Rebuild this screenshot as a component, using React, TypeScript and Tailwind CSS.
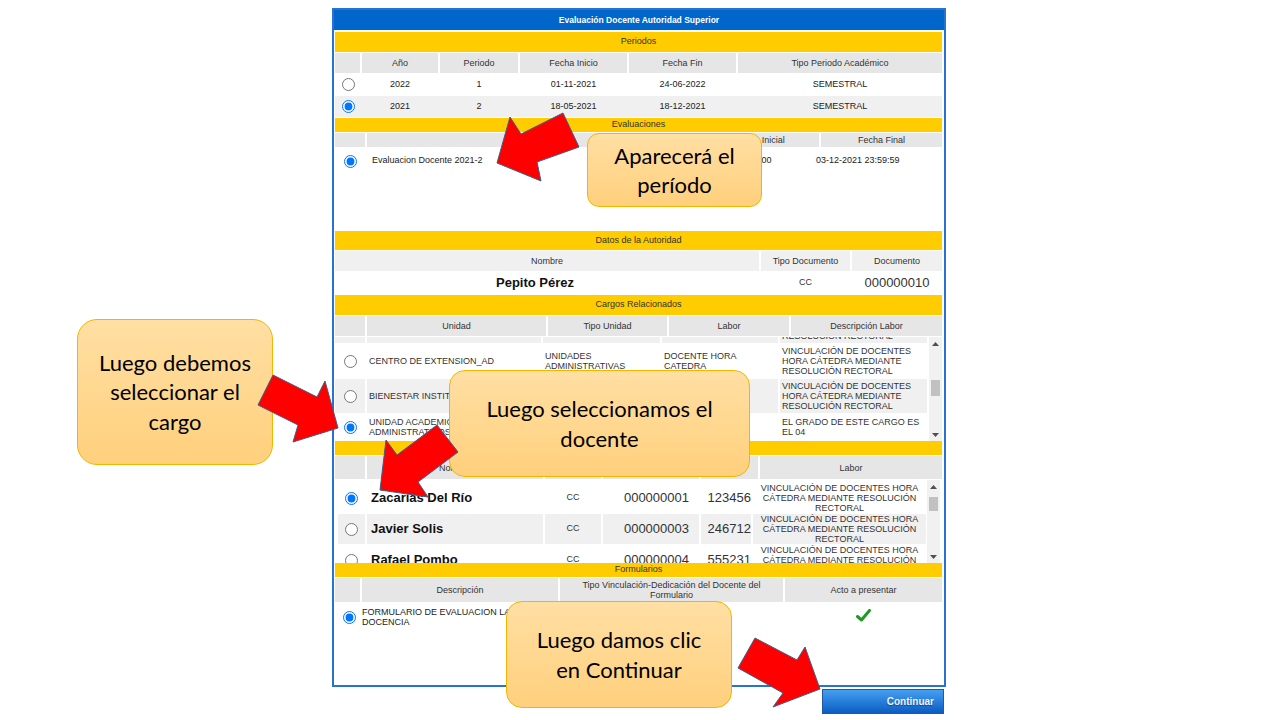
import React from "react";

function Radio({ on }: { on?: boolean }) {
  return <input type="radio" checked={!!on} readOnly className="m-0 h-[13px] w-[13px]" />;
}

function Bar({ className, children }: { className: string; children?: React.ReactNode }) {
  return (
    <div className={`bg-[#ffcc00] text-[9px] text-[#333] flex items-center justify-center ${className}`}>
      {children}
    </div>
  );
}

function Th({ className, children }: { className: string; children?: React.ReactNode }) {
  return (
    <div className={`bg-[#e6e6e6] flex items-center justify-center text-center text-[9px] leading-[10px] text-[#333] ${className}`}>
      {children}
    </div>
  );
}

function Tri({ up }: { up?: boolean }) {
  return (
    <svg width="7" height="4" viewBox="0 0 7 4">
      <polygon points={up ? "0,4 3.5,0 7,4" : "0,0 7,0 3.5,4"} fill="#505050" />
    </svg>
  );
}

function ScrollBar({ thumb }: { thumb: string }) {
  return (
    <div className="w-[13px] h-full bg-[#f1f1f1] flex flex-col">
      <div className="h-[13px] flex items-center justify-center">
        <Tri up />
      </div>
      <div className="flex-1">
        <div className={`mx-auto w-[9px] bg-[#c1c1c1] ${thumb}`} />
      </div>
      <div className="h-[13px] flex items-center justify-center">
        <Tri />
      </div>
    </div>
  );
}

const desc = (
  <>
    VINCULACIÓN DE DOCENTES
    <br />
    HORA CÁTEDRA MEDIANTE
    <br />
    RESOLUCIÓN RECTORAL
  </>
);

const labor = (
  <>
    VINCULACIÓN DE DOCENTES HORA
    <br />
    CÁTEDRA MEDIANTE RESOLUCIÓN
    <br />
    RECTORAL
  </>
);

function CargoRow({
  bg,
  h,
  on,
  unidad,
  tipo,
  lab,
  children,
}: {
  bg: string;
  h: string;
  on?: boolean;
  unidad: string;
  tipo: string;
  lab: string;
  children: React.ReactNode;
}) {
  const cell = `${bg} flex items-center pl-[2px] text-[9px] leading-[10px] text-[#333]`;
  return (
    <div className={`flex gap-[2px] ${h}`}>
      <div className={`${bg} w-[30px] flex items-center justify-center`}>
        <Radio on={on} />
      </div>
      <div className={`${cell} w-[174px]`}>{unidad}</div>
      <div className={`${cell} w-[117px]`}>{tipo}</div>
      <div className={`${cell} w-[116px]`}>{lab}</div>
      <div className={`${cell} w-[147px]`}>{children}</div>
    </div>
  );
}

function DocRow({ bg, on, name, doc, code }: { bg: string; on?: boolean; name: string; doc: string; code: string }) {
  return (
    <div className="flex gap-[2px] h-[30px] pl-[3px]">
      <div className={`${bg} w-[27px] flex items-center justify-center`}>
        <Radio on={on} />
      </div>
      <div className={`${bg} w-[176px] flex items-center pl-[4px] text-[13px] font-bold text-[#111]`}>{name}</div>
      <div className={`${bg} w-[56px] flex items-center justify-center text-[9px]`}>CC</div>
      <div className={`${bg} w-[96px] flex items-center justify-end pr-[10px] text-[13px]`}>{doc}</div>
      <div className={`${bg} w-[50px] flex items-center justify-end text-[13px]`}>{code}</div>
      <div className={`${bg} w-[173px] flex items-center justify-center text-center text-[9px] leading-[10px]`}>{labor}</div>
    </div>
  );
}

function Callout({ className, children }: { className: string; children: React.ReactNode }) {
  return (
    <div
      className={`absolute flex items-center justify-center text-center border border-[#f2b600] bg-linear-to-b from-[#ffdfa3] to-[#ffd07c] font-['Lato',sans-serif] text-[22px] leading-[29.5px] text-black ${className}`}
    >
      <div>{children}</div>
    </div>
  );
}

export default function App() {
  return (
    <div className="relative w-[1280px] h-[720px] overflow-hidden bg-white font-['Liberation_Sans',Arial,sans-serif] text-[#333]">
      <div className="ml-[332px] pt-[8px] w-[614px]">
        <div className="h-[679px] border-2 border-[#2a72d0] flex flex-col">
          <div className="h-[20px] shrink-0 bg-[#0066cc] text-white font-bold text-[8.5px] flex items-center justify-center">
            Evaluación Docente Autoridad Superior
          </div>
          <div className="pl-px pr-[2px] flex flex-col flex-1">
            {/* Periodos */}
            <Bar className="mt-[2px] h-[20px]">Periodos</Bar>
            <div className="mt-px h-[20px] flex gap-[2px]">
              <Th className="w-[25px]" />
              <Th className="w-[76px]">Año</Th>
              <Th className="w-[78px]">Periodo</Th>
              <Th className="w-[107px]">Fecha Inicio</Th>
              <Th className="w-[107px]">Fecha Fin</Th>
              <Th className="flex-1">Tipo Periodo Académico</Th>
            </div>
            {[
              { bg: "bg-white", on: false, a: "2022", p: "1", i: "01-11-2021", f: "24-06-2022" },
              { bg: "bg-[#f0f0f0]", on: true, a: "2021", p: "2", i: "18-05-2021", f: "18-12-2021" },
            ].map((r) => (
              <div key={r.a} className={`mt-px h-[21px] flex gap-[2px] text-[9px] text-[#222] ${r.bg}`}>
                <div className="w-[25px] pl-px flex items-center justify-center">
                  <Radio on={r.on} />
                </div>
                <div className="w-[76px] flex items-center justify-center">{r.a}</div>
                <div className="w-[78px] flex items-center justify-center">{r.p}</div>
                <div className="w-[107px] flex items-center justify-center">{r.i}</div>
                <div className="w-[107px] flex items-center justify-center">{r.f}</div>
                <div className="flex-1 flex items-center justify-center">SEMESTRAL</div>
              </div>
            ))}

            {/* Evaluaciones */}
            <Bar className="mt-px h-[14px]">Evaluaciones</Bar>
            <div className="mt-px h-[14px] flex gap-[2px]">
              <Th className="w-[30px]" />
              <Th className="w-[331px]">Descripción</Th>
              <Th className="w-[119px]">Fecha Inicial</Th>
              <Th className="flex-1">Fecha Final</Th>
            </div>
            <div className="h-[84px]">
              <div className="mt-[2px] h-[24px] flex gap-[2px] text-[9px] text-[#222]">
                <div className="w-[30px] flex items-center justify-center">
                  <Radio on />
                </div>
                <div className="w-[317px] flex items-center pl-[5px]">Evaluacion Docente 2021-2</div>
                <div className="w-[126px] flex items-center pl-[2px]">18-05-2021 00:00:00</div>
                <div className="flex-1 flex items-center pl-[2px]">03-12-2021 23:59:59</div>
              </div>
            </div>

            {/* Datos de la Autoridad */}
            <Bar className="h-[19px]">Datos de la Autoridad</Bar>
            <div className="mt-px h-[20px] flex gap-[2px]">
              <Th className="w-[424px] bg-[#f0f0f0]">Nombre</Th>
              <Th className="w-[89px] bg-[#f0f0f0]">Tipo Documento</Th>
              <Th className="flex-1 bg-[#f0f0f0]">Documento</Th>
            </div>
            <div className="mt-px h-[21px] flex gap-[2px]">
              <div className="w-[424px] flex items-center justify-center pr-[24px] text-[13px] font-bold text-[#111]">
                Pepito Pérez
              </div>
              <div className="w-[89px] flex items-center justify-center text-[9px]">CC</div>
              <div className="flex-1 flex items-center justify-center text-[13px]">000000010</div>
            </div>

            {/* Cargos Relacionados */}
            <Bar className="mt-[2px] h-[20px]">Cargos Relacionados</Bar>
            <div className="mt-px h-[20px] flex gap-[2px]">
              <Th className="w-[30px]" />
              <Th className="w-[179px]">Unidad</Th>
              <Th className="w-[119px]">Tipo Unidad</Th>
              <Th className="w-[120px]">Labor</Th>
              <Th className="flex-1">Descripción Labor</Th>
            </div>
            <div className="mt-px h-[104px] flex gap-[2px]">
              <div className="w-[592px] overflow-hidden flex flex-col gap-px">
                {/* fila anterior, casi oculta por el desplazamiento */}
                <div className="h-[6px] shrink-0 flex gap-[2px]">
                  <div className="w-[30px] bg-[#f0f0f0]" />
                  <div className="w-[174px] bg-[#f0f0f0]" />
                  <div className="w-[117px] bg-[#f0f0f0]" />
                  <div className="w-[116px] bg-[#f0f0f0]" />
                  <div className="w-[147px] bg-[#f0f0f0] overflow-hidden flex items-end pl-[2px] text-[9px] leading-[10px] text-[#333]">
                    <span className="mb-[2px] shrink-0">RESOLUCIÓN RECTORAL</span>
                  </div>
                </div>
                <CargoRow
                  bg="bg-white"
                  h="h-[34px] shrink-0"
                  unidad="CENTRO DE EXTENSION_AD"
                  tipo="UNIDADES ADMINISTRATIVAS"
                  lab="DOCENTE HORA CATEDRA"
                >
                  <span>{desc}</span>
                </CargoRow>
                <CargoRow
                  bg="bg-[#f0f0f0]"
                  h="h-[34px] shrink-0"
                  unidad="BIENESTAR INSTITUCIONAL"
                  tipo="UNIDADES ADMINISTRATIVAS"
                  lab="DOCENTE HORA CATEDRA"
                >
                  <span>{desc}</span>
                </CargoRow>
                <CargoRow
                  bg="bg-white"
                  h="h-[26px] shrink-0"
                  on
                  unidad="UNIDAD ACADEMICA ADMINISTRATIVOS"
                  tipo="UNIDADES ACADEMICAS"
                  lab="DIRECTIVO"
                >
                  <span>
                    EL GRADO DE ESTE CARGO ES
                    <br />
                    EL 04
                  </span>
                </CargoRow>
              </div>
              <ScrollBar thumb="mt-[30px] h-[16px]" />
            </div>

            {/* Docentes */}
            <Bar className="h-[14px]">Docentes</Bar>
            <div className="mt-px h-[23px] flex gap-[2px]">
              <Th className="w-[30px]" />
              <Th className="w-[176px]">Nombre</Th>
              <Th className="w-[56px]">Tipo Doc.</Th>
              <Th className="w-[96px]">Documento</Th>
              <Th className="w-[57px]">Código</Th>
              <Th className="flex-1">Labor</Th>
            </div>
            <div className="mt-px h-[83px] flex">
              <div className="w-[591px] overflow-hidden pt-[3px] flex flex-col gap-px">
                <DocRow bg="bg-white" on name="Zacarías Del Río" doc="000000001" code="123456" />
                <DocRow bg="bg-[#f0f0f0]" name="Javier Solis" doc="000000003" code="246712" />
                <DocRow bg="bg-white" name="Rafael Pombo" doc="000000004" code="555231" />
              </div>
              <div className="ml-px h-full">
                <ScrollBar thumb="mt-[4px] h-[14px]" />
              </div>
            </div>

            {/* Formularios */}
            <Bar className="h-[14px]">Formularios</Bar>
            <div className="mt-px h-[24px] flex gap-[2px]">
              <Th className="w-[25px]" />
              <Th className="w-[196px]">Descripción</Th>
              <Th className="w-[223px]">
                Tipo Vinculación-Dedicación del Docente del
                <br />
                Formulario
              </Th>
              <Th className="flex-1">Acto a presentar</Th>
            </div>
            <div className="mt-[3px] h-[24px] flex text-[9px] leading-[10px] text-[#222]">
              <div className="w-[27px] pl-[2px] flex items-center justify-center">
                <Radio on />
              </div>
              <div className="w-[196px] flex items-center">
                <span>
                  FORMULARIO DE EVALUACION LABOR
                  <br />
                  DOCENCIA
                </span>
              </div>
              <div className="ml-[2px] w-[223px] flex items-center justify-center">HORA CÁTEDRA</div>
              <div className="ml-[2px] flex-1 flex items-center justify-center pb-[4px]">
                <svg width="15" height="13" viewBox="0 0 15 13">
                  <path d="M1.5 7.5 L5.5 11 L13.5 1.5" fill="none" stroke="#1f9a24" strokeWidth="3" strokeLinecap="round" strokeLinejoin="round" />
                </svg>
              </div>
            </div>
          </div>
        </div>
        <div className="flex justify-end pr-[2px] pt-[2px]">
          <button className="w-[122px] h-[25px] flex items-center justify-end pr-[9px] border border-[#2458a0] bg-linear-to-b from-[#44a0f2] to-[#0a5cc2] text-[10px] font-bold text-[#eef5ff] [text-shadow:0_1px_1px_rgba(0,0,0,0.4)]">
            Continuar
          </button>
        </div>
      </div>

      {/* Notas sobre la captura */}
      <Callout className="left-[587px] top-[133px] w-[175px] h-[74px] rounded-[12px]">
        Aparecerá el
        <br />
        período
      </Callout>
      <Callout className="left-[77px] top-[319px] w-[196px] h-[146px] rounded-[20px]">
        Luego debemos
        <br />
        seleccionar el
        <br />
        cargo
      </Callout>
      <Callout className="left-[449px] top-[370px] w-[301px] h-[107px] rounded-[16px]">
        Luego seleccionamos el
        <br />
        docente
      </Callout>
      <Callout className="left-[506px] top-[601px] w-[226px] h-[107px] rounded-[16px]">
        Luego damos clic
        <br />
        en Continuar
      </Callout>

      <svg className="absolute left-0 top-0 pointer-events-none" width="1280" height="720" viewBox="0 0 1280 720">
        <g fill="#ff0000" stroke="#3b5f8a" strokeWidth="1" strokeLinejoin="miter">
          <polygon points="497,163 510,117 521,134 563,113 579,147 537,162 541,181" />
          <polygon points="338,428 325,381 317,397 273,375 258,405 298,425 293,442" />
          <polygon points="380,490 386,440 397,455 437,425 458,452 418,482 428,497" />
          <polygon points="820,689 805,647 797,660 755,638 738,668 783,693 773,707" />
        </g>
      </svg>
    </div>
  );
}
